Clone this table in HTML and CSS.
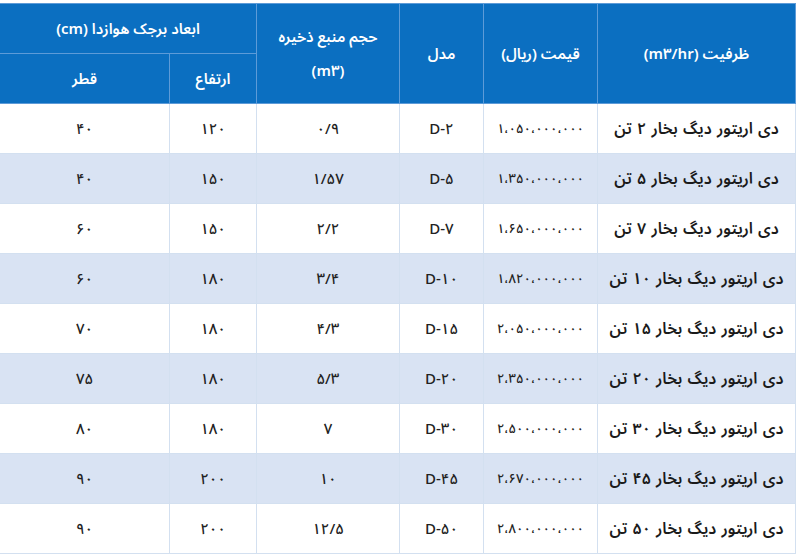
FILE: index.html
```html
<!DOCTYPE html>
<html lang="fa" dir="rtl">
<head>
<meta charset="utf-8">
<link rel="stylesheet" href="styles.css">
</head>
<body>
<table class="spec">
<colgroup>
<col class="c1"><col class="c2"><col class="c3"><col class="c4"><col class="c5"><col class="c6">
</colgroup>
<thead>
<tr>
<th rowspan="2">ظرفیت (m۳/hr)</th>
<th rowspan="2">قیمت (ریال)</th>
<th rowspan="2">مدل</th>
<th rowspan="2" class="two">حجم منبع ذخیره<br>(m۳)</th>
<th colspan="2">ابعاد برجک هوازدا (cm)</th>
</tr>
<tr>
<th>ارتفاع</th>
<th>قطر</th>
</tr>
</thead>
<tbody>
<tr><td class="name">دی اریتور دیگ بخار ۲ تن</td><td class="price">۱،۰۵۰،۰۰۰،۰۰۰</td><td>D-۲</td><td>۰/۹</td><td>۱۲۰</td><td>۴۰</td></tr>
<tr><td class="name">دی اریتور دیگ بخار ۵ تن</td><td class="price">۱،۳۵۰،۰۰۰،۰۰۰</td><td>D-۵</td><td>۱/۵۷</td><td>۱۵۰</td><td>۴۰</td></tr>
<tr><td class="name">دی اریتور دیگ بخار ۷ تن</td><td class="price">۱،۶۵۰،۰۰۰،۰۰۰</td><td>D-۷</td><td>۲/۲</td><td>۱۵۰</td><td>۶۰</td></tr>
<tr><td class="name">دی اریتور دیگ بخار ۱۰ تن</td><td class="price">۱،۸۲۰،۰۰۰،۰۰۰</td><td>D-۱۰</td><td>۳/۴</td><td>۱۸۰</td><td>۶۰</td></tr>
<tr><td class="name">دی اریتور دیگ بخار ۱۵ تن</td><td class="price">۲،۰۵۰،۰۰۰،۰۰۰</td><td>D-۱۵</td><td>۴/۳</td><td>۱۸۰</td><td>۷۰</td></tr>
<tr><td class="name">دی اریتور دیگ بخار ۲۰ تن</td><td class="price">۲،۳۵۰،۰۰۰،۰۰۰</td><td>D-۲۰</td><td>۵/۳</td><td>۱۸۰</td><td>۷۵</td></tr>
<tr><td class="name">دی اریتور دیگ بخار ۳۰ تن</td><td class="price">۲،۵۰۰،۰۰۰،۰۰۰</td><td>D-۳۰</td><td>۷</td><td>۱۸۰</td><td>۸۰</td></tr>
<tr><td class="name">دی اریتور دیگ بخار ۴۵ تن</td><td class="price">۲،۶۷۰،۰۰۰،۰۰۰</td><td>D-۴۵</td><td>۱۰</td><td>۲۰۰</td><td>۹۰</td></tr>
<tr><td class="name">دی اریتور دیگ بخار ۵۰ تن</td><td class="price">۲،۸۰۰،۰۰۰،۰۰۰</td><td>D-۵۰</td><td>۱۲/۵</td><td>۲۰۰</td><td>۹۰</td></tr>
</tbody>
</table>
</body>
</html>
```

FILE: styles.css
```css
html, body {
  margin: 0;
  padding: 0;
  background: #ffffff;
}
body {
  font-family: "Noto Sans Arabic", "DejaVu Sans", sans-serif;
  color: #222222;
}
.spec {
  margin: 3px 4px 0 0;
  width: 796px;
  border-collapse: collapse;
  table-layout: fixed;
  border: 1px solid #d3e0f0;
}
.c1 { width: 198px; }
.c2 { width: 114px; }
.c3 { width: 84px; }
.c4 { width: 143px; }
.c5 { width: 87px; }
.c6 { width: 170px; }
.spec th {
  background: #0b6fc1;
  color: #ffffff;
  font-size: 15px;
  font-weight: 600;
  height: 49px;
  padding: 0;
  border: 1px solid #5d9bd8;
  text-align: center;
  vertical-align: middle;
}
.spec th.two {
  line-height: 34px;
}
.spec td {
  height: 49px;
  padding: 0;
  border: 1px solid #d3e0f0;
  text-align: center;
  vertical-align: middle;
  font-size: 15px;
  font-weight: 500;
}
.spec tbody tr:nth-child(even) td {
  background: #d9e3f3;
}
.spec td.name {
  font-size: 16px;
  font-weight: 600;
  color: #1a1a1a;
  word-spacing: 1px;
}
.spec td.price {
  font-size: 13px;
  letter-spacing: 0.5px;
}
```
